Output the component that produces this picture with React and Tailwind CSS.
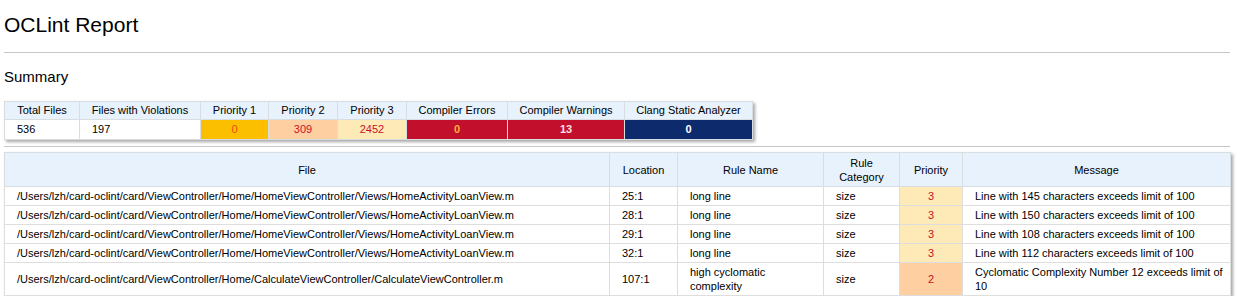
import React from "react";

const summaryCols = [
  { label: "Total Files", w: "w-[75px]" },
  { label: "Files with Violations", w: "w-[121px]" },
  { label: "Priority 1", w: "w-[68px]" },
  { label: "Priority 2", w: "w-[69px]" },
  { label: "Priority 3", w: "w-[69px]" },
  { label: "Compiler Errors", w: "w-[101px]" },
  { label: "Compiler Warnings", w: "w-[117px]" },
  { label: "Clang Static Analyzer", w: "w-[128px]" },
];

const violations = [
  {
    file: "/Users/lzh/card-oclint/card/ViewController/Home/HomeViewController/Views/HomeActivityLoanView.m",
    location: "25:1",
    rule: "long line",
    category: "size",
    priority: 3,
    message: "Line with 145 characters exceeds limit of 100",
  },
  {
    file: "/Users/lzh/card-oclint/card/ViewController/Home/HomeViewController/Views/HomeActivityLoanView.m",
    location: "28:1",
    rule: "long line",
    category: "size",
    priority: 3,
    message: "Line with 150 characters exceeds limit of 100",
  },
  {
    file: "/Users/lzh/card-oclint/card/ViewController/Home/HomeViewController/Views/HomeActivityLoanView.m",
    location: "29:1",
    rule: "long line",
    category: "size",
    priority: 3,
    message: "Line with 108 characters exceeds limit of 100",
  },
  {
    file: "/Users/lzh/card-oclint/card/ViewController/Home/HomeViewController/Views/HomeActivityLoanView.m",
    location: "32:1",
    rule: "long line",
    category: "size",
    priority: 3,
    message: "Line with 112 characters exceeds limit of 100",
  },
  {
    file: "/Users/lzh/card-oclint/card/ViewController/Home/CalculateViewController/CalculateViewController.m",
    location: "107:1",
    rule: "high cyclomatic complexity",
    category: "size",
    priority: 2,
    message: "Cyclomatic Complexity Number 12 exceeds limit of 10",
  },
];

// priority cell colours
const priorityClass = (p) => {
  switch (p) {
    case 1:
      return "bg-[#fcbf00] text-[#e2500a]";
    case 2:
      return "bg-[#fdcfa1] text-[#c8102e]";
    default:
      return "bg-[#feeab6] text-[#c8102e]";
  }
};

const App = () => {
  return (
    <div className="px-1 pt-3 pb-4 font-['Liberation_Sans',Arial,sans-serif] text-black bg-white min-h-[296px]">
      <h1 className="text-[21px] leading-[26px]">OCLint Report</h1>
      <hr className="mt-[14px] border-0 border-t border-[#c6c6c6] w-[1226px]" />
      <h2 className="mt-[15px] text-[15px] leading-[18px]">Summary</h2>

      <table className="mt-[15px] table-fixed border-collapse text-[11px] shadow-[2px_2px_3px_rgba(0,0,0,0.35)]">
        <thead>
          <tr className="bg-[#e7f2fc]">
            {summaryCols.map((c) => (
              <th
                key={c.label}
                className={`${c.w} border border-[#d8dde2] px-2 py-[2px] leading-[13px] font-normal text-center`}
              >
                {c.label}
              </th>
            ))}
          </tr>
        </thead>
        <tbody>
          <tr className="leading-[13px]">
            <td className="border border-[#d8dde2] px-3 py-[3px]">536</td>
            <td className="border border-[#d8dde2] px-3 py-[3px]">197</td>
            <td className="border border-[#d8dde2] py-[3px] text-center bg-[#fcbf00] text-[#e2500a]">0</td>
            <td className="border border-[#d8dde2] py-[3px] text-center bg-[#fdcfa1] text-[#c8102e]">309</td>
            <td className="border border-[#d8dde2] py-[3px] text-center bg-[#feeab6] text-[#c8102e]">2452</td>
            <td className="border border-[#d8dde2] py-[3px] text-center bg-[#c20f2c] text-[#fcb23a] font-bold">0</td>
            <td className="border border-[#d8dde2] py-[3px] text-center bg-[#c20f2c] text-[#fde0e0] font-bold">13</td>
            <td className="border border-[#d8dde2] py-[3px] text-center bg-[#0c2a6c] text-white font-bold">0</td>
          </tr>
        </tbody>
      </table>

      <hr className="mt-[6px] border-0 border-t border-[#c6c6c6] w-[1226px]" />

      <table className="mt-[5px] w-[1226px] table-fixed border-collapse text-[11px] shadow-[2px_2px_3px_rgba(0,0,0,0.35)]">
        <thead>
          <tr className="bg-[#e7f2fc]">
            <th className="w-[605px] border border-[#d8dde2] px-3 py-[2.5px] leading-[14px] font-normal">File</th>
            <th className="w-[68px] border border-[#d8dde2] px-2 py-[2.5px] leading-[14px] font-normal">Location</th>
            <th className="w-[146px] border border-[#d8dde2] px-2 py-[2.5px] leading-[14px] font-normal">Rule Name</th>
            <th className="w-[76px] border border-[#d8dde2] px-2 py-[2.5px] leading-[14px] font-normal">
              Rule
              <br />
              Category
            </th>
            <th className="w-[63px] border border-[#d8dde2] px-2 py-[2.5px] leading-[14px] font-normal">Priority</th>
            <th className="w-[268px] border border-[#d8dde2] px-2 py-[2.5px] leading-[14px] font-normal">Message</th>
          </tr>
        </thead>
        <tbody>
          {violations.map((v, i) => (
            <tr key={i} className="leading-[14px]">
              <td className="border border-[#dedede] px-3 py-[2px]">{v.file}</td>
              <td className="border border-[#dedede] px-3 py-[2px]">{v.location}</td>
              <td className="border border-[#dedede] px-3 py-[2px]">{v.rule}</td>
              <td className="border border-[#dedede] px-3 py-[2px]">{v.category}</td>
              <td className={`border border-[#dedede] py-[2px] text-center ${priorityClass(v.priority)}`}>
                {v.priority}
              </td>
              <td className="border border-[#dedede] pl-3 pr-1 py-[2px]">{v.message}</td>
            </tr>
          ))}
        </tbody>
      </table>
    </div>
  );
};

export default App;
